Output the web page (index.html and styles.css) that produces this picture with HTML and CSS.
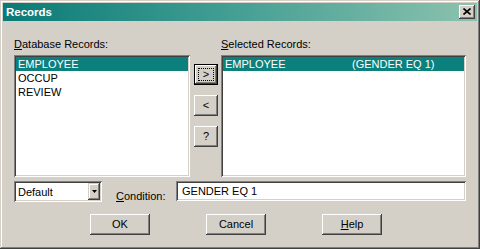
FILE: index.html
```html
<!DOCTYPE html>
<html>
<head>
<meta charset="utf-8">
<link rel="stylesheet" href="styles.css">
</head>
<body>
<div class="window">
  <div class="titlebar">
    <span class="title">Records</span>
    <div class="close">
      <svg width="8" height="7" viewBox="0 0 8 7"><path d="M0.5 0.5 L7.5 6.5 M7.5 0.5 L0.5 6.5" stroke="#000" stroke-width="1.6" fill="none"/></svg>
    </div>
  </div>
  <div class="content">
    <div class="main">
      <div class="col col-left">
        <div class="lbl"><u>D</u>atabase Records:</div>
        <div class="listbox">
          <div class="item sel">EMPLOYEE</div>
          <div class="item">OCCUP</div>
          <div class="item">REVIEW</div>
        </div>
      </div>
      <div class="col-mid">
        <div class="btn small default"><span class="focus">&gt;</span></div>
        <div class="btn small">&lt;</div>
        <div class="btn small q">?</div>
      </div>
      <div class="col col-right">
        <div class="lbl"><u>S</u>elected Records:</div>
        <div class="listbox">
          <div class="item sel"><span class="c1">EMPLOYEE</span><span>(GENDER EQ 1)</span></div>
        </div>
      </div>
    </div>
    <div class="cond-row">
      <div class="combo">
        <span class="combo-text">Default</span>
        <div class="drop"><svg width="5" height="3" viewBox="0 0 5 3"><path d="M0 0 H5 L2.5 3 Z" fill="#000"/></svg></div>
      </div>
      <div class="cond-lbl"><u>C</u>ondition:</div>
      <div class="edit">GENDER EQ 1</div>
    </div>
    <div class="btn-row">
      <div class="btn big">OK</div>
      <div class="btn big">Cancel</div>
      <div class="btn big"><u>H</u>elp</div>
    </div>
  </div>
</div>
</body>
</html>
```

FILE: styles.css
```css
html, body {
  margin: 0;
  padding: 0;
  background: #d4d0c8;
}
body {
  font-family: "Liberation Sans", Arial, sans-serif;
  font-size: 11px;
  color: #000;
}
.window {
  width: 480px;
  height: 249px;
  box-sizing: border-box;
  background: #d4d0c8;
  padding: 3px;
  box-shadow: inset -1px -1px #404040, inset 1px 1px #d4d0c8, inset -2px -2px #808080, inset 2px 2px #ffffff;
  display: flex;
  flex-direction: column;
}
.titlebar {
  height: 18px;
  background: linear-gradient(90deg, #0a7a76 0%, #3f9c92 45%, #8cc2ae 100%);
  display: flex;
  align-items: center;
  justify-content: space-between;
  padding: 0 2px 0 3px;
}
.title {
  color: #fff;
  font-weight: bold;
  font-size: 11.5px;
  line-height: 14px;
}
.close {
  width: 16px;
  height: 14px;
  box-sizing: border-box;
  background: #d4d0c8;
  box-shadow: inset -1px -1px #404040, inset 1px 1px #ffffff, inset -2px -2px #808080, inset 2px 2px #d4d0c8;
  display: flex;
  align-items: center;
  justify-content: center;
  padding: 0 1px 1px 0;
}
.close svg { display: block; }
.content {
  padding: 17px 11px 0 11px;
  display: flex;
  flex-direction: column;
}
.main {
  display: flex;
  align-items: flex-start;
}
.col { display: flex; flex-direction: column; }
.col-left { width: 176px; }
.col-right { width: 245px; margin-left: 3px; }
.lbl {
  line-height: 13px;
  height: 13px;
  margin-bottom: 4px;
}
u { text-decoration: underline; text-underline-offset: 1px; }
.listbox {
  height: 122px;
  box-sizing: border-box;
  background: #fff;
  padding: 2px;
  box-shadow: inset 1px 1px #808080, inset -1px -1px #ffffff, inset 2px 2px #404040, inset -2px -2px #d4d0c8;
}
.item {
  height: 14px;
  line-height: 14px;
  padding-left: 2px;
  white-space: nowrap;
}
.item.sel {
  background: #0b807d;
  color: #fff;
}
.c1 {
  display: inline-block;
  width: 127px;
}
.col-mid {
  width: 24px;
  margin-left: 4px;
  padding-top: 26px;
  display: flex;
  flex-direction: column;
  gap: 10px;
}
.btn {
  box-sizing: border-box;
  background: #d4d0c8;
  box-shadow: inset -1px -1px #404040, inset 1px 1px #ffffff, inset -2px -2px #808080, inset 2px 2px #d4d0c8;
  display: flex;
  align-items: center;
  justify-content: center;
  line-height: 13px;
}
.btn.small {
  width: 24px;
  height: 21px;
}
.btn.default {
  box-shadow: inset 0 0 0 1px #000, inset -2px -2px #404040, inset 2px 2px #ffffff, inset -3px -3px #808080;
}
.focus {
  display: flex;
  align-items: center;
  justify-content: center;
  width: 14px;
  height: 11px;
  outline: 1px dotted #000;
}
.cond-row {
  display: flex;
  align-items: flex-start;
  margin-top: 4px;
}
.combo {
  width: 88px;
  height: 21px;
  box-sizing: border-box;
  background: #fff;
  padding: 2px;
  box-shadow: inset 1px 1px #808080, inset -1px -1px #ffffff, inset 2px 2px #404040, inset -2px -2px #d4d0c8;
  display: flex;
}
.combo-text {
  flex: 1;
  padding: 3px 0 0 2px;
  line-height: 13px;
}
.drop {
  width: 12px;
  height: 17px;
  box-sizing: border-box;
  background: #d4d0c8;
  box-shadow: inset -1px -1px #404040, inset 1px 1px #d4d0c8, inset -2px -2px #808080, inset 2px 2px #ffffff;
  display: flex;
  align-items: center;
  justify-content: center;
  padding-bottom: 1px;
}
.drop svg { display: block; }
.cond-lbl {
  width: 60px;
  margin-left: 14px;
  margin-top: 9px;
  line-height: 13px;
}
.edit {
  flex: 1;
  height: 20px;
  box-sizing: border-box;
  background: #fff;
  padding: 4px 0 0 6px;
  line-height: 13px;
  box-shadow: inset 1px 1px #808080, inset -1px -1px #ffffff, inset 2px 2px #404040, inset -2px -2px #d4d0c8;
}
.btn-row {
  display: flex;
  margin-top: 11px;
  padding-left: 76px;
  gap: 56px;
}
.btn.big {
  width: 60px;
  height: 21px;
}
```
